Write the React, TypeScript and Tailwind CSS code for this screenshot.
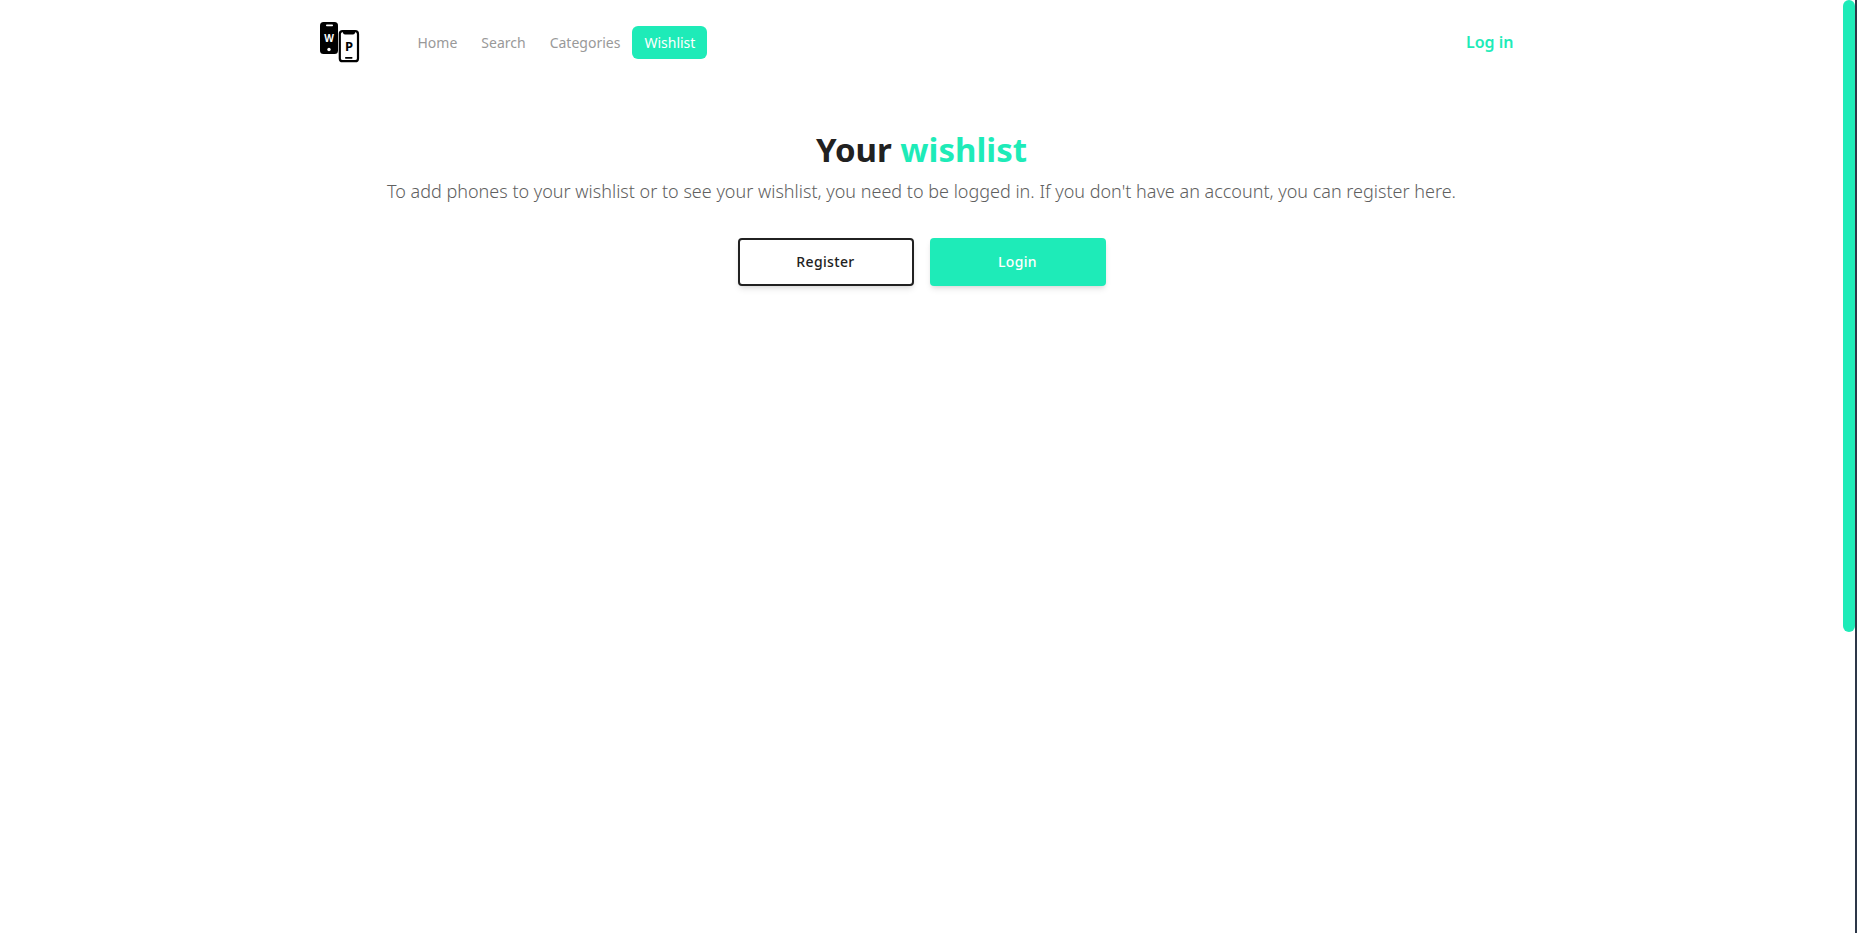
const links = ["Home", "Search", "Categories", "Wishlist"];

function Logo() {
  return (
    <svg viewBox="0 0 52 52" className="size-[52px]" role="img" aria-label="WP">
      <rect x="6" y="6" width="18" height="32" rx="3.5" fill="#000" />
      <rect x="12" y="8.6" width="7" height="1.6" rx="0.8" fill="#fff" />
      <circle cx="15" cy="33.5" r="1.7" fill="#fff" />
      <text x="15" y="26" textAnchor="middle" fill="#fff" fontSize="10" fontWeight="700" fontFamily="Noto Sans, sans-serif">W</text>
      <rect x="25.8" y="15.2" width="18.2" height="30" rx="2.8" fill="#fff" stroke="#000" strokeWidth="2.2" />
      <path d="M29 15h12v1.5a2 2 0 0 1-2 2h-8a2 2 0 0 1-2-2z" fill="#000" />
      <rect x="31" y="41" width="7.5" height="1.8" rx="0.8" fill="#000" />
      <text x="35" y="35" textAnchor="middle" fill="#000" fontSize="13" fontWeight="700" fontFamily="Noto Sans, sans-serif">P</text>
    </svg>
  );
}

export default function App() {
  return (
    <div className="flex min-h-screen bg-white font-['Noto_Sans',sans-serif]">
      <div className="min-w-0 flex-1">
        <header className="mx-auto flex max-w-7xl items-center justify-between px-8 py-4">
          <div className="flex items-center gap-10">
            <a href="#home"><Logo /></a>
            <nav className="flex">
              {links.map((label) => (
                <a
                  key={label}
                  href={"#" + label.toLowerCase()}
                  className={
                    label === "Wishlist"
                      ? "rounded-md bg-[#1eebb8] px-3 py-2 text-sm leading-[17px] text-white"
                      : "rounded-md px-3 py-2 text-sm leading-[17px] text-[#999999]"
                  }
                >
                  {label}
                </a>
              ))}
            </nav>
          </div>
          <a href="#login" className="px-4 text-base font-semibold text-[#1eebb8]">Log in</a>
        </header>
        <main className="flex flex-col items-center px-8 pt-[46px] text-center">
          <h1 className="text-[33px] leading-10 font-bold text-[#212121]">
            Your <span className="text-[#1eebb8]">wishlist</span>
          </h1>
          <p className="mt-[7px] text-lg font-light text-[#606060]">
            To add phones to your wishlist or to see your wishlist, you need to be logged in. If you don't have an account, you can register here.
          </p>
          <div className="mt-[33px] flex gap-4">
            <button type="button" className="h-12 w-44 rounded border-2 border-[#212121] bg-white text-sm font-medium tracking-wide text-[#212121] shadow-md">
              Register
            </button>
            <button type="button" className="h-12 w-44 rounded bg-[#1eebb8] text-sm font-medium tracking-wide text-white shadow-md">
              Login
            </button>
          </div>
        </main>
      </div>
      <div className="h-screen w-[14px] shrink-0 border-r-2 border-[#2d3748]" aria-hidden="true">
        <div className="h-[67.7%] rounded-full bg-[#1eebb8]" />
      </div>
    </div>
  );
}
